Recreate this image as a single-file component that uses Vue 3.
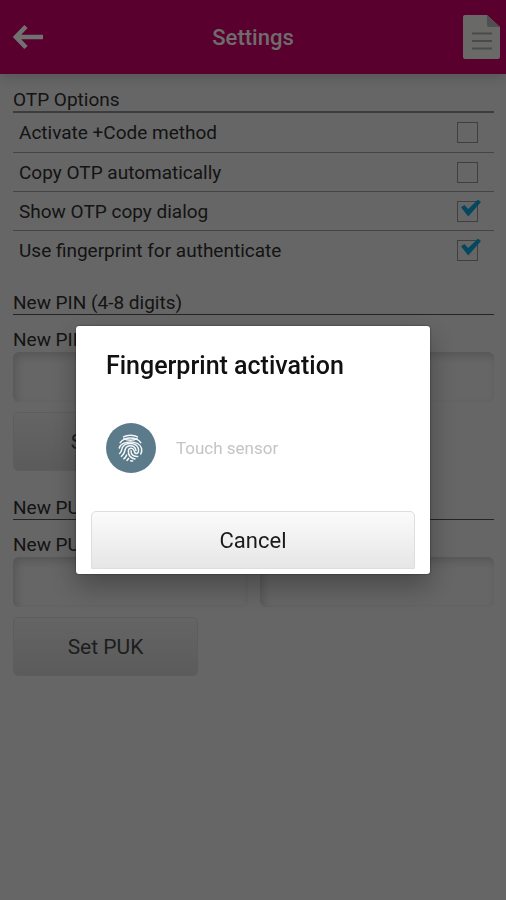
<!--
  Settings screen: OTP options, new PIN and new PUK forms,
  with the fingerprint activation dialog on top.
-->

<script setup>
import { ref } from 'vue'

const options = ref([
  { id: 'plus-code', label: 'Activate +Code method', checked: false },
  { id: 'copy-otp', label: 'Copy OTP automatically', checked: false },
  { id: 'copy-dialog', label: 'Show OTP copy dialog', checked: true },
  { id: 'fingerprint', label: 'Use fingerprint for authenticate', checked: true },
])

const codes = ref([
  { id: 'pin', title: 'New PIN (4-8 digits)', label: 'New PIN', button: 'Set PIN', value: '', repeat: '' },
  { id: 'puk', title: 'New PUK', label: 'New PUK', button: 'Set PUK', value: '', repeat: '' },
])

const showDialog = ref(true)
</script>

<template>
  <div class="screen">
    <header class="header">
      <button class="icon-button" aria-label="Back">
        <svg width="30" height="26" viewBox="0 0 30 26" aria-hidden="true">
          <path d="M13 2.5 L3 13 L13 23.5 M3.5 13 H30" fill="none" stroke="currentColor" stroke-width="4.6" />
        </svg>
      </button>
      <h1 class="header-title">Settings</h1>
      <button class="icon-button icon-button-end" aria-label="Log">
        <svg width="37" height="44" viewBox="0 0 37 44" aria-hidden="true">
          <path d="M2 0 H24 L37 12 V42 Q37 44 35 44 H2 Q0 44 0 42 V2 Q0 0 2 0 Z" fill="currentColor" />
          <path d="M24 0 L37 12 H26 Q24 12 24 10 Z" fill="#858585" />
          <path d="M9 18.5 H29 M9 26 H29 M9 33.5 H29" stroke="#7c7c7c" stroke-width="2" />
        </svg>
      </button>
    </header>

    <main class="content">
      <section class="section">
        <h2 class="section-title">OTP Options</h2>
        <div v-for="option in options" :key="option.id" class="option">
          <label :for="option.id">{{ option.label }}</label>
          <input :id="option.id" v-model="option.checked" type="checkbox" class="checkbox" />
        </div>
      </section>

      <section v-for="code in codes" :key="code.id" class="section section-form">
        <h2 class="section-title">{{ code.title }}</h2>
        <label class="field-label" :for="code.id">{{ code.label }}</label>
        <div class="fields">
          <input :id="code.id" v-model="code.value" type="password" class="field" />
          <input v-model="code.repeat" type="password" class="field" :aria-label="code.label" />
        </div>
        <button class="set-button">{{ code.button }}</button>
      </section>
    </main>

    <div v-if="showDialog" class="scrim">
      <div class="dialog" role="dialog" aria-modal="true" aria-labelledby="dialog-title">
        <h2 id="dialog-title" class="dialog-title">Fingerprint activation</h2>
        <div class="sensor">
          <span class="sensor-icon">
            <svg width="25" height="28" viewBox="0 0 25 28" aria-hidden="true">
              <g fill="none" stroke="#f4f8fa" stroke-width="1.5" stroke-linecap="round">
                <path d="M5.5 2.8 C9 0.6 16 0.6 19.5 2.8" />
                <path d="M2.2 8.6 C7 2.6 18 2.6 22.8 8.6" />
                <path d="M6 4.6 C9.5 6.8 15.5 6.8 19 4.6" />
                <path d="M1.2 14 C3.5 6.2 21.5 5.6 23.6 14.5 C24 17 23.6 18.6 22.8 20" />
                <path d="M1.6 19.5 C4 17.5 3.4 15.5 4.4 13.4 C7.4 8 18.4 8.2 20.4 14.4 C21 17.4 20.2 19.4 18.6 19.6 C16 19.8 16.6 17 15.6 15.6 C14.2 13.6 11 13.8 10.4 16.4 C9.8 20.6 12.4 24.4 17 25" />
                <path d="M3.4 22.4 C6.8 20 6.6 17.6 7.2 15.2 C8.8 10.6 16.2 10.6 17.6 15.2 L18 16.6" />
                <path d="M5.8 24.8 C7.2 23.8 8.2 22.4 8.6 21" />
                <path d="M9 26.4 C9.8 25.8 10.2 25 10.6 24.4" />
                <path d="M13 16.8 C13 20.6 15.2 22.8 19.8 22.4" />
                <path d="M12.6 26.8 C13.4 27 14 27 14.6 27" />
              </g>
            </svg>
          </span>
          <span class="sensor-text">Touch sensor</span>
        </div>
        <button class="cancel-button" @click="showDialog = false">Cancel</button>
      </div>
    </div>
  </div>
</template>

<style>
body {
  background: #aaa;
}
</style>

<style scoped>
.screen {
  min-height: 100vh;
  background: #aaa;
  color: #222;
  font-family: Roboto, "Liberation Sans", sans-serif;
  font-size: 19px;
}

.header {
  display: grid;
  grid-template-columns: 1fr auto 1fr;
  align-items: center;
  height: 74px;
  padding: 0 6px;
  box-sizing: border-box;
  background: #96004d;
  color: #b8b4b6;
  box-shadow: 0 2px 12px rgba(0, 0, 0, 0.2);
}

.header-title {
  margin: 0;
  font-size: 22px;
  font-weight: 500;
}

.icon-button {
  display: flex;
  justify-self: start;
  padding: 0 7px;
  border: none;
  background: none;
  color: #bcbcbc;
  cursor: pointer;
}

.icon-button-end {
  justify-self: end;
  padding: 0;
  color: #b0b0ac;
}

.content {
  padding: 15px 12px 24px 13px;
}

.section {
  margin-bottom: 23px;
}

.section-title {
  margin: 0;
  border-bottom: 2px solid #666;
  font-size: 19px;
  font-weight: 400;
  line-height: 22px;
}

.section-form {
  margin-bottom: 26px;
}

.section-form .section-title {
  border-bottom: 1px solid #3c3c3c;
}

.option {
  display: flex;
  align-items: center;
  justify-content: space-between;
  height: 39px;
  padding: 0 16px 0 6px;
  box-sizing: border-box;
}

.option + .option {
  border-top: 1px solid #747474;
}

.checkbox {
  position: relative;
  width: 21px;
  height: 21px;
  margin: 0;
  border: 1px solid #6a6a6a;
  appearance: none;
}

.checkbox:checked::after {
  content: '';
  position: absolute;
  top: -2px;
  left: 3px;
  width: 20px;
  height: 17px;
  background: #08799f;
  clip-path: polygon(0 45%, 17% 33%, 36% 56%, 85% 0, 100% 14%, 36% 100%);
}

.field-label {
  display: block;
  margin-top: 12px;
  line-height: 25px;
}

.fields {
  display: flex;
  gap: 12px;
}

.field {
  flex: 1;
  min-width: 0;
  height: 50px;
  padding: 0 12px;
  box-sizing: border-box;
  border: none;
  border-radius: 6px;
  background: #aaa;
  box-shadow: inset 3px 4px 8px rgba(0, 0, 0, 0.16);
  font: inherit;
}

.set-button {
  display: block;
  width: 185px;
  height: 59px;
  margin-top: 10px;
  border: 1px solid #9c9c9c;
  border-radius: 5px;
  background: linear-gradient(#a8a8a8, #989898);
  color: #333;
  font-family: inherit;
  font-size: 21px;
}

/* Dialog */
.scrim {
  position: fixed;
  inset: 0;
  display: flex;
  align-items: center;
  justify-content: center;
  background: rgba(0, 0, 0, 0.4);
}

.dialog {
  width: 70%;
  padding: 24px 15px 5px;
  box-sizing: border-box;
  border-radius: 3px;
  background: #fff;
  box-shadow: 0 0 2px rgba(0, 0, 0, 0.6), 0 12px 28px rgba(0, 0, 0, 0.3);
}

.dialog-title {
  margin: 0 15px;
  color: #111;
  font-size: 25px;
  font-weight: 500;
  line-height: 32px;
}

.sensor {
  display: flex;
  align-items: center;
  gap: 20px;
  margin: 41px 15px 38px;
}

.sensor-icon {
  display: flex;
  align-items: center;
  justify-content: center;
  width: 50px;
  height: 50px;
  border-radius: 50%;
  background: #5b7b8a;
}

.sensor-text {
  color: #c4c4c4;
  font-size: 17px;
}

.cancel-button {
  display: block;
  width: 100%;
  height: 58px;
  border: 1px solid #dedede;
  border-radius: 5px 5px 0 0;
  background: linear-gradient(#fbfbfb, #e6e6e6);
  color: #1a1a1a;
  font-family: inherit;
  font-size: 22px;
}
</style>
